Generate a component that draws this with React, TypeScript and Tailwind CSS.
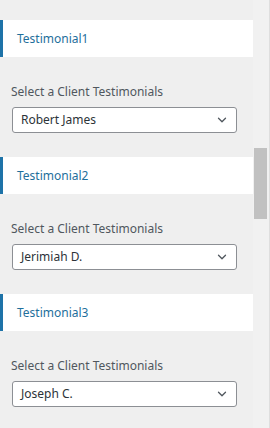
import React from 'react';

const sections = [
  { title: 'Testimonial1', value: 'Robert James' },
  { title: 'Testimonial2', value: 'Jerimiah D.' },
  { title: 'Testimonial3', value: 'Joseph C.' },
];

const Chevron: React.FC = () => (
  <svg width="10" height="6" viewBox="0 0 10 6" fill="none" className="shrink-0">
    <path d="M1.5 1.2l3.5 3.5 3.5-3.5" stroke="#50575e" strokeWidth="1.3" strokeLinecap="round" strokeLinejoin="round" />
  </svg>
);

const Section: React.FC<{ title: string; value: string }> = ({ title, value }) => (
  <div className="mb-[24px]">
    <div className="h-[37px] bg-white border-l-[3px] border-[#1e73a8] flex items-center pl-[14px] text-[12px] text-[#1f6f9c]">
      {title}
    </div>
    <div className="mt-[27px] h-[16px] flex items-center pl-[11px] text-[12px] text-[#50575e]">
      Select a Client Testimonials
    </div>
    <div className="mt-[7px] ml-[12px] w-[225px] h-[26px] bg-white border border-[#8c8f94] rounded-[3px] flex items-center justify-between pl-[8px] pr-[9px] text-[12px] text-[#2c3338]">
      <span>{value}</span>
      <Chevron />
    </div>
  </div>
);

export default function App() {
  return (
    <div
      className="w-[270px] h-[428px] overflow-hidden bg-[#efefef] flex"
      style={{ fontFamily: '"Noto Sans", "Open Sans", Arial, sans-serif' }}
    >
      <div className="w-[253px] pt-[20px] shrink-0">
        {sections.map((s, i) => (
          <Section key={i} {...s} />
        ))}
      </div>
      <div className="w-[17px] bg-[#f1f1f1] border-r border-[#dedede] pt-[148px] pl-[1px]">
        <div className="w-[13px] h-[71px] bg-[#c1c1c1]" />
      </div>
    </div>
  );
}
